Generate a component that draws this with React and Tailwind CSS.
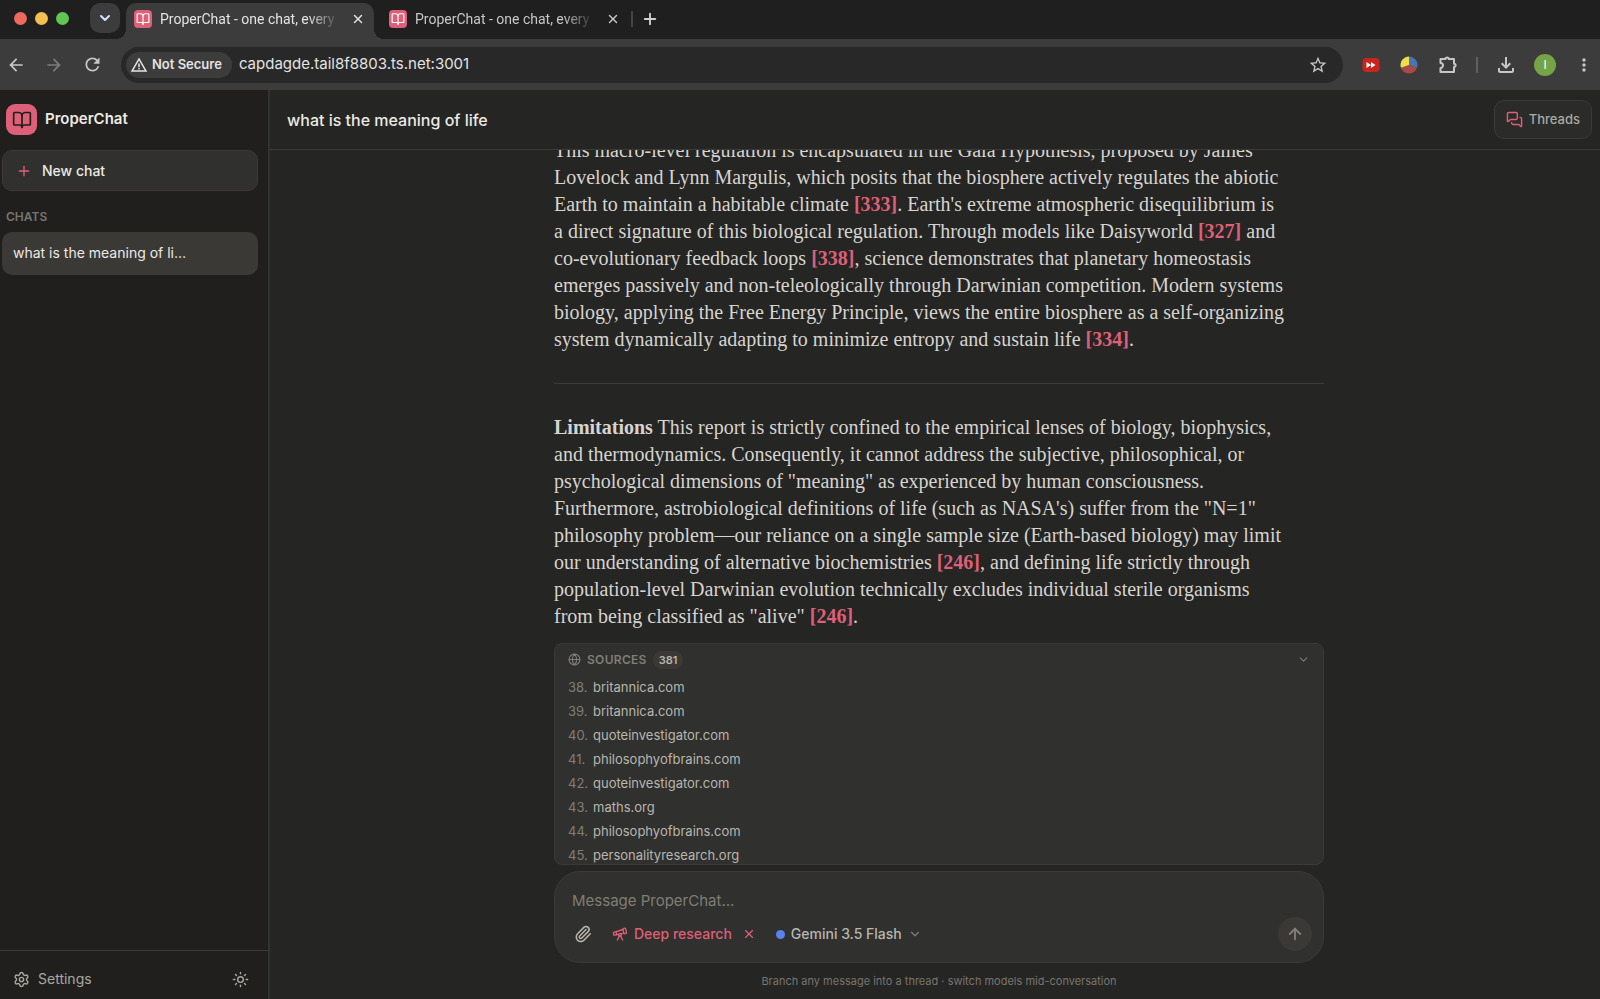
import React from "react";
import {
  ArrowUp,
  BookOpen,
  ChevronDown,
  Globe,
  MessagesSquare,
  Paperclip,
  Plus,
  Settings,
  Sun,
  Telescope,
  X,
} from "lucide-react";
import {
  MdArrowBack,
  MdArrowForward,
  MdMoreVert,
  MdOutlineFileDownload,
  MdRefresh,
  MdStarBorder,
  MdWarningAmber,
} from "react-icons/md";

const sources = [
  { id: 38, host: "britannica.com" },
  { id: 39, host: "britannica.com" },
  { id: 40, host: "quoteinvestigator.com" },
  { id: 41, host: "philosophyofbrains.com" },
  { id: 42, host: "quoteinvestigator.com" },
  { id: 43, host: "maths.org" },
  { id: 44, host: "philosophyofbrains.com" },
  { id: 45, host: "personalityresearch.org" },
];

const Favicon = () => (
  <span className="flex size-[18px] shrink-0 items-center justify-center rounded bg-[#de5f78] text-white">
    <BookOpen size={14} strokeWidth={2} />
  </span>
);

const BrowserTab = ({ active }) => (
  <div
    className={`relative flex w-[248px] items-center rounded-t-[10px] pb-1 pl-2 pr-2 ${
      active
        ? "bg-[#3c3c3c] text-[#e3e3e3] before:absolute before:-left-[10px] before:bottom-0 before:size-[10px] before:bg-[radial-gradient(circle_at_0_0,transparent_10px,#3c3c3c_10px)] after:absolute after:-right-[10px] after:bottom-0 after:size-[10px] after:bg-[radial-gradient(circle_at_100%_0,transparent_10px,#3c3c3c_10px)]"
        : "text-[#c7c7c7]"
    }`}
  >
    <Favicon />
    <span className="ml-2 w-[180px] overflow-hidden whitespace-nowrap font-[Roboto,sans-serif] text-sm [mask-image:linear-gradient(to_right,#000_82%,transparent)]">
      ProperChat - one chat, every
    </span>
    <button aria-label="Close tab" className="ml-[10px] flex size-4 items-center justify-center">
      <X size={14} strokeWidth={2.5} />
    </button>
  </div>
);

const PuzzleIcon = () => (
  <svg width="20" height="20" viewBox="0 0 20 20" fill="none" stroke="currentColor" strokeWidth="2" strokeLinejoin="round">
    <path d="M2.500 4h5a1.600 1.600 0 0 1 3.200 0H16v4.700a1.600 1.600 0 0 1 0 3.200V17H2.500v-4a2.500 2.500 0 0 0 0-5z" />
  </svg>
);

const BrowserChrome = () => (
  <header className="shrink-0">
    <div className="flex h-[39px] bg-[#1f1f1f] pt-[3px]">
      <div className="flex items-center gap-2 pb-[6px] pl-[14px]">
        <span className="size-[13px] rounded-full bg-[#ed6a5e]" />
        <span className="size-[13px] rounded-full bg-[#f4bf4f]" />
        <span className="size-[13px] rounded-full bg-[#61c554]" />
      </div>
      <button
        aria-label="Search tabs"
        className="ml-[21px] mr-[6px] flex size-[30px] items-center justify-center rounded-[10px] bg-[#3c3c3c] text-[#d3e3fd]"
      >
        <ChevronDown size={16} strokeWidth={3} />
      </button>
      <BrowserTab active />
      <div className="ml-[7px] flex">
        <BrowserTab />
      </div>
      <div className="flex items-center pb-1 text-[#d0d0d0]">
        <span className="ml-[2px] h-4 w-[2px] bg-[#444444]" />
        <button aria-label="New tab" className="ml-2">
          <Plus size={18} strokeWidth={2.5} />
        </button>
      </div>
    </div>

    <div className="flex h-[51px] items-center bg-[#3c3c3c] text-[#c7c7c7]">
      <button aria-label="Back" className="ml-[6px]">
        <MdArrowBack size={20} />
      </button>
      <button aria-label="Forward" className="ml-[18px] text-[#7c7c7c]">
        <MdArrowForward size={20} />
      </button>
      <button aria-label="Reload" className="ml-[18px]">
        <MdRefresh size={21} />
      </button>
      <div className="ml-[18px] flex h-9 flex-1 items-center rounded-full bg-[#282828] pl-[5px] pr-[15px]">
        <button className="flex h-[26px] items-center gap-1 rounded-full bg-[#3c3c3c] pl-1 pr-[10px] text-[13px] font-semibold text-[#e3e3e3]">
          <MdWarningAmber size={18} />
          Not Secure
        </button>
        <input
          type="text"
          aria-label="Address"
          defaultValue="capdagde.tail8f8803.ts.net:3001"
          className="ml-[7px] min-w-0 flex-1 bg-transparent text-[15px] text-[#e3e3e3] outline-none"
        />
        <button aria-label="Bookmark">
          <MdStarBorder size={20} />
        </button>
      </div>
      <div className="flex items-center pl-[19px] pr-[6px]">
        <button aria-label="Skip ads">
          <svg width="18" height="14" viewBox="0 0 18 14">
            <rect x="0.500" width="17" height="14" rx="4" fill="#c9251f" />
            <path d="M4.500 4l4.500 3-4.500 3zM9 4l4.500 3L9 10z" fill="#fff" />
          </svg>
        </button>
        <button aria-label="Color picker" className="ml-5">
          <svg width="18" height="18" viewBox="0 0 18 18">
            <path d="M9 9V0.500a8.500 8.500 0 0 1 8 11.300z" fill="#4a74b4" />
            <path d="M9 9l8 2.800a8.500 8.500 0 0 1-16 0z" fill="#a94a47" />
            <path d="M9 9L1 11.800A8.500 8.500 0 0 1 9 0.500z" fill="#efe04b" />
          </svg>
        </button>
        <button aria-label="Extensions" className="ml-5">
          <PuzzleIcon />
        </button>
        <span className="ml-[18px] h-4 w-[2px] bg-[#606060]" />
        <button aria-label="Downloads" className="ml-4">
          <MdOutlineFileDownload size={24} />
        </button>
        <button
          aria-label="Profile"
          className="ml-4 flex size-[22px] items-center justify-center rounded-full bg-[#75a345] text-xs text-white"
        >
          I
        </button>
        <button aria-label="Menu" className="ml-[18px]">
          <MdMoreVert size={20} />
        </button>
      </div>
    </div>
  </header>
);

const Sidebar = () => (
  <aside className="flex w-[270px] shrink-0 flex-col border-r-2 border-[#33322f] bg-[#201f1d]">
    <div className="flex flex-1 flex-col pl-[2px] pr-[10px] pt-[14px]">
      <div className="flex items-center gap-2 pl-1">
        <span className="flex size-[31px] items-center justify-center rounded-[9px] bg-[#de5f78] text-[#201f1d]">
          <BookOpen size={20} strokeWidth={2} />
        </span>
        <h1 className="text-[15px] font-semibold">ProperChat</h1>
      </div>
      <button className="mt-[15px] flex h-[41px] items-center gap-[10px] rounded-[10px] border border-[#3b3a37] bg-[#30302e] pl-[13px] text-sm font-medium">
        <Plus size={16} strokeWidth={2} className="text-[#de5f78]" />
        New chat
      </button>
      <h2 className="mt-4 pl-1 text-xs font-semibold leading-5 text-[#77756f]">CHATS</h2>
      <button className="mt-[5px] h-[43px] rounded-[10px] bg-[#3a3936] pb-[2px] pl-[11px] text-left text-sm">
        what is the meaning of li…
      </button>
    </div>
    <div className="flex h-[49px] items-center justify-between border-t border-[#3b3a37] pl-[13px] pr-[19px] pt-2 text-[#aaa8a0]">
      <button className="flex items-center gap-2 text-sm">
        <Settings size={17} strokeWidth={2} />
        Settings
      </button>
      <button aria-label="Toggle theme">
        <Sun size={17} strokeWidth={2} />
      </button>
    </div>
  </aside>
);

const Cite = ({ n }) => (
  <a href={`#source-${n}`} className="font-bold text-[#de5f78]">
    [{n}]
  </a>
);

const Report = () => (
  <article className="whitespace-nowrap font-['Liberation_Serif',serif] text-[20px] leading-[27px] text-[#d6d4d0]">
    <p>
      This macro-level regulation is encapsulated in the Gaia Hypothesis, proposed by James
      <br />
      Lovelock and Lynn Margulis, which posits that the biosphere actively regulates the abiotic
      <br />
      Earth to maintain a habitable climate <Cite n={333} />. Earth's extreme atmospheric disequilibrium is
      <br />
      a direct signature of this biological regulation. Through models like Daisyworld <Cite n={327} /> and
      <br />
      co-evolutionary feedback loops <Cite n={338} />, science demonstrates that planetary homeostasis
      <br />
      emerges passively and non-teleologically through Darwinian competition. Modern systems
      <br />
      biology, applying the Free Energy Principle, views the entire biosphere as a self-organizing
      <br />
      system dynamically adapting to minimize entropy and sustain life <Cite n={334} />.
    </p>
    <hr className="mb-[30px] mt-[30px] border-[#3b3a37]" />
    <p>
      <strong>Limitations</strong> This report is strictly confined to the empirical lenses of biology, biophysics,
      <br />
      and thermodynamics. Consequently, it cannot address the subjective, philosophical, or
      <br />
      psychological dimensions of "meaning" as experienced by human consciousness.
      <br />
      Furthermore, astrobiological definitions of life (such as NASA's) suffer from the "N=1"
      <br />
      philosophy problem—our reliance on a single sample size (Earth-based biology) may limit
      <br />
      our understanding of alternative biochemistries <Cite n={246} />, and defining life strictly through
      <br />
      population-level Darwinian evolution technically excludes individual sterile organisms
      <br />
      from being classified as "alive" <Cite n={246} />.
    </p>
  </article>
);

const Sources = () => (
  <section className="mt-[13px] h-[222px] shrink-0 overflow-hidden rounded-lg border border-[#3b3a37] bg-[#30302e] px-[13px]">
    <button className="flex h-[31px] w-full items-center text-[#807e77]">
      <Globe size={13} strokeWidth={2} />
      <span className="ml-[6px] text-xs font-semibold tracking-wide">SOURCES</span>
      <span className="ml-[6px] rounded-full bg-[#3a3936] px-[6px] text-[11px] font-semibold leading-[18px] text-[#b8b6ae]">
        381
      </span>
      <ChevronDown size={13} className="ml-auto" />
    </button>
    <ol className="text-[13px] leading-6">
      {sources.map((source) => (
        <li key={source.id} id={`source-${source.id}`} className="flex gap-[6px]">
          <span className="w-[19px] text-[#807e77]">{source.id}.</span>
          <a href={`https://${source.host}`} className="text-[#b8b6ae]">
            {source.host}
          </a>
        </li>
      ))}
    </ol>
  </section>
);

const Composer = () => (
  <form className="rounded-[26px] border border-[#3b3a37] bg-[#30302e] pb-[11px] pl-[17px] pr-[11px] pt-[16px]">
    <input
      type="text"
      aria-label="Message"
      placeholder="Message ProperChat…"
      className="block h-6 w-full bg-transparent text-[15px] outline-none placeholder:text-[#807e77]"
    />
    <div className="mt-[5px] flex h-[34px] items-center text-sm font-medium text-[#b8b6ae]">
      <button type="button" aria-label="Attach file" className="ml-[2px]">
        <Paperclip size={18} strokeWidth={2} />
      </button>
      <button type="button" className="ml-5 flex items-center gap-[6px] text-[#de5f78]">
        <Telescope size={16} strokeWidth={2} />
        Deep research
      </button>
      <button type="button" aria-label="Turn off deep research" className="ml-[10px] text-[#de5f78]">
        <X size={14} strokeWidth={2} />
      </button>
      <button type="button" className="ml-5 flex items-center gap-[6px]">
        <span className="size-[9px] rounded-full bg-[#5684ec]" />
        Gemini 3.5 Flash
        <ChevronDown size={14} strokeWidth={2} className="text-[#807e77]" />
      </button>
      <button
        type="button"
        aria-label="Send"
        className="ml-auto flex size-[34px] items-center justify-center rounded-full bg-[#3a3936] text-[#807e77]"
      >
        <ArrowUp size={18} strokeWidth={2.5} />
      </button>
    </div>
  </form>
);

const App = () => (
  <div className="flex h-screen flex-col overflow-hidden bg-[#252523] font-[Inter,sans-serif] text-[#eceae3]">
    <BrowserChrome />
    <div className="flex min-h-0 flex-1">
      <Sidebar />
      <main className="flex min-w-0 flex-1 flex-col">
        <div className="flex h-[60px] shrink-0 items-center justify-between border-b border-[#3b3a37] pl-[17px] pr-2">
          <h2 className="text-base font-medium">what is the meaning of life</h2>
          <button className="flex h-[39px] items-center gap-[6px] rounded-[10px] border border-[#3b3a37] bg-[#2b2b29] px-[11px] text-[13px] font-medium text-[#aaa8a0]">
            <MessagesSquare size={17} strokeWidth={2} className="text-[#de5f78]" />
            Threads
          </button>
        </div>
        <div className="flex min-h-0 flex-1 flex-col justify-end overflow-hidden pl-2">
          <div className="mx-auto flex w-full max-w-[770px] flex-col">
            <Report />
            <Sources />
          </div>
        </div>
        <div className="shrink-0 pl-2 pt-[6px]">
          <div className="mx-auto w-full max-w-[770px]">
            <Composer />
            <p className="h-9 pt-2 text-center text-[11px] leading-5 text-[#77756f]">
              Branch any message into a thread · switch models mid-conversation
            </p>
          </div>
        </div>
      </main>
    </div>
  </div>
);

export default App;
